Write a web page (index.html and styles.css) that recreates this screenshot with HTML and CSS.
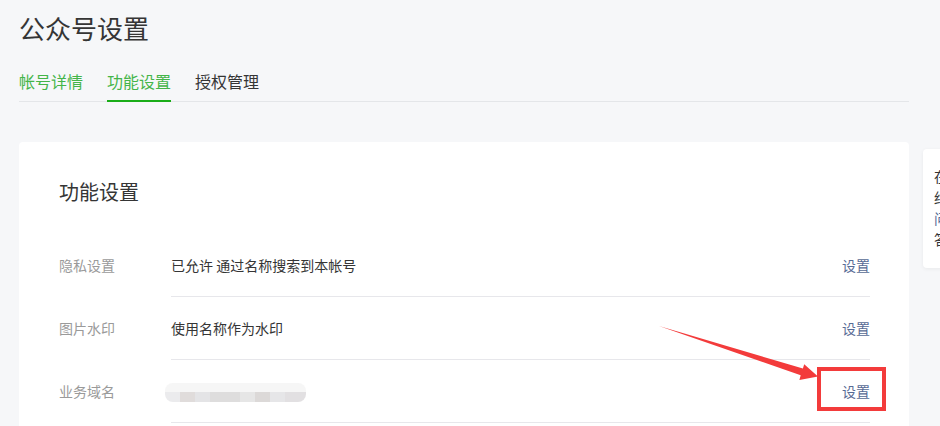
FILE: index.html
```html
<!DOCTYPE html>
<html lang="zh-CN">
<head>
<meta charset="utf-8">
<title>公众号设置</title>
<link rel="stylesheet" href="styles.css">
</head>
<body>
<div class="page">
  <header class="head">
    <h1 class="page-title">公众号设置</h1>
    <nav class="tabs">
      <a class="tab tab-link">帐号详情</a>
      <a class="tab tab-active">功能设置</a>
      <a class="tab">授权管理</a>
    </nav>
  </header>
  <div class="body-row">
    <section class="card">
      <h2 class="card-title">功能设置</h2>
      <div class="row">
        <div class="row-label">隐私设置</div>
        <div class="row-main">
          <span class="row-value">已允许 通过名称搜索到本帐号</span>
          <a class="row-action">设置</a>
        </div>
      </div>
      <div class="row">
        <div class="row-label">图片水印</div>
        <div class="row-main">
          <span class="row-value">使用名称作为水印</span>
          <a class="row-action">设置</a>
        </div>
      </div>
      <div class="row">
        <div class="row-label">业务域名</div>
        <div class="row-main">
          <span class="blurred"></span>
          <a class="row-action">设置</a>
        </div>
      </div>
    </section>
    <aside class="side">
      <p class="side-line">在线问答</p>
      <p class="side-line">约定时间</p>
      <p class="side-line side-link">问题反馈</p>
      <p class="side-line">答疑解惑</p>
    </aside>
  </div>
  <svg class="annot" width="940" height="426" viewBox="0 0 940 426">
    <polygon points="659,326 802.9,368.6 804.2,364.2 818,376.5 799.4,380 800.7,375.2" fill="#f33b3b"/>
    <rect x="819" y="369" width="65" height="40" fill="none" stroke="#f33b3b" stroke-width="4"/>
  </svg>
</div>
</body>
</html>
```
FILE: styles.css
```css
html, body {
  margin: 0;
  padding: 0;
}
body {
  background: #f6f7f9;
  font-family: "Noto Sans CJK SC", "Noto Sans", sans-serif;
  color: #353535;
  width: 940px;
  height: 426px;
  overflow: hidden;
}
.page {
  position: relative;
  padding: 10px 0 0 19px;
  width: 921px;
  height: 416px;
}
.head {
  width: 890px;
}
.page-title {
  margin: 0;
  font-size: 26px;
  line-height: 36px;
  font-weight: 400;
  color: #353535;
}
.tabs {
  display: flex;
  gap: 24px;
  margin-top: 23px;
  border-bottom: 1px solid #e4e6e9;
}
.tab {
  font-size: 16px;
  line-height: 24px;
  padding-bottom: 7px;
  border-bottom: 2px solid transparent;
  margin-bottom: -1px;
  color: #353535;
}
.tab-link {
  color: #44b549;
}
.tab-active {
  color: #44b549;
  border-bottom-color: #1aad19;
}
.body-row {
  display: flex;
  align-items: flex-start;
  margin-top: 40px;
}
.card {
  width: 890px;
  flex: none;
  box-sizing: border-box;
  background: #fff;
  border-radius: 4px;
  padding: 36px 39px 0 40px;
  height: 300px;
}
.card-title {
  margin: 0 0 28px;
  font-size: 20px;
  line-height: 28px;
  font-weight: 400;
  color: #353535;
}
.row {
  display: flex;
  font-size: 14px;
}
.row-label {
  width: 112px;
  flex: none;
  color: #9a9a9a;
  line-height: 62px;
}
.row-main {
  flex: 1;
  display: flex;
  justify-content: space-between;
  align-items: center;
  height: 62px;
  border-bottom: 1px solid #e7e7eb;
}
.row-value {
  color: #353535;
}
.row-action {
  color: #576b95;
}
.blurred {
  display: block;
  width: 141px;
  height: 19px;
  margin-left: -6px;
  margin-top: 2px;
  border-radius: 8px;
  background:
    linear-gradient(to bottom, #f6f6f6 0 50%, transparent 50% 100%),
    linear-gradient(to right, #ebebed 0 15px, #e0dcdb 15px 30px, #e4e4e6 30px 45px, #dedddd 45px 75px, #e6e6e6 75px 90px, #dcd9d8 90px 105px, #e6e6e8 105px 120px, #e2e0e2 120px 141px);
}
.side {
  flex: none;
  width: 200px;
  margin-left: 14px;
  margin-top: 7px;
  box-sizing: border-box;
  height: 119px;
  padding: 17px 12px 0 11px;
  background: #fff;
  border-radius: 4px;
  box-shadow: 0 1px 4px rgba(0, 0, 0, 0.06);
}
.side-line {
  margin: 0;
  font-size: 14px;
  line-height: 21px;
  white-space: nowrap;
  color: #353535;
}
.side-link {
  color: #576b95;
}
.annot {
  position: absolute;
  left: 0;
  top: 0;
  pointer-events: none;
}
```
